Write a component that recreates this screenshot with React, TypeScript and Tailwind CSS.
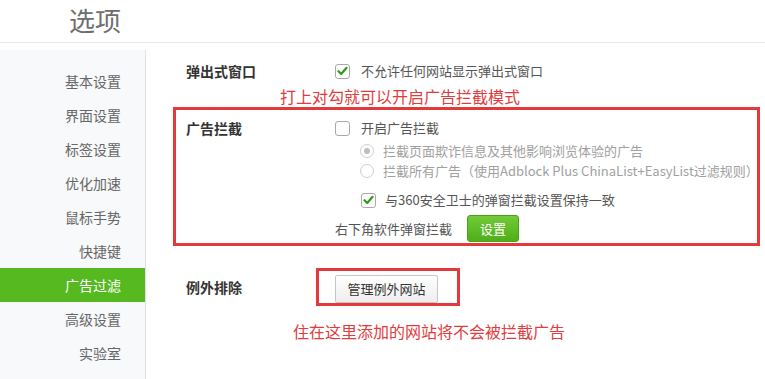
import React from 'react';

const font = '"Noto Sans CJK SC", "Liberation Sans", sans-serif';

const navItems = ['基本设置', '界面设置', '标签设置', '优化加速', '鼠标手势', '快捷键', '广告过滤', '高级设置', '实验室'];

function Checkbox({ checked }: { checked?: boolean }) {
  return (
    <span className="flex h-[15px] w-[15px] shrink-0 items-center justify-center rounded-[3px] border border-[#a9a9a9] bg-white">
      {checked && (
        <svg width="11" height="10" viewBox="0 0 11 10">
          <path d="M1.5 5.2 L4.2 8 L9.6 1.8" fill="none" stroke="#2f9a1c" strokeWidth="2.2" strokeLinecap="round" strokeLinejoin="round" />
        </svg>
      )}
    </span>
  );
}

function Radio({ checked }: { checked?: boolean }) {
  return (
    <span className="flex h-[14px] w-[14px] shrink-0 items-center justify-center rounded-full border border-[#cfcfcf] bg-white">
      {checked && <span className="h-[6px] w-[6px] rounded-full bg-[#bdbdbd]" />}
    </span>
  );
}

export default function App() {
  return (
    <div className="h-[379px] w-[765px] overflow-hidden bg-white" style={{ fontFamily: font }}>
      <div className="h-[43px] border-b border-[#e6e6e6] pl-[69px] pt-[3px]">
        <div className="text-[26px] leading-[34px] text-[#6e6e6e]">选项</div>
      </div>

      <div className="flex">
        <div className="mt-[7px] h-[340px] w-[146px] shrink-0 border-r border-[#e2e2e2] bg-[#f8f9fa] pt-[14px]">
          {navItems.map((item) => (
            <div
              key={item}
              className={
                item === '广告过滤'
                  ? 'h-[34px] bg-[#55b91f] pr-[24px] text-right text-[14px] leading-[34px] text-white'
                  : 'h-[34px] pr-[24px] text-right text-[14px] leading-[34px] text-[#666]'
              }
            >
              {item}
            </div>
          ))}
        </div>

        <div className="flex-1 pl-[40px] pt-[18px] text-[13px] text-[#555]">
          <div className="flex h-[20px] items-center">
            <div className="w-[149px] text-[14px] font-bold text-[#333]">弹出式窗口</div>
            <Checkbox checked />
            <span className="ml-[11px] leading-[20px]">不允许任何网站显示弹出式窗口</span>
          </div>

          <div className="ml-[94px] mt-[5px] h-[20px] text-[16px] leading-[20px] text-[#e23b3b]">打上对勾就可以开启广告拦截模式</div>

          <div className="-ml-[13px] mt-[1px] w-[587px] border-[3px] border-[#e4393c] pb-[1px] pl-[10px] pt-[8px]">
            <div className="flex h-[20px] items-center">
              <div className="w-[149px] text-[14px] font-bold text-[#333]">广告拦截</div>
              <Checkbox />
              <span className="ml-[11px]">开启广告拦截</span>
            </div>
            <div className="ml-[174px] mt-[3px] flex h-[20px] items-center text-[#a0a0a0]">
              <Radio checked />
              <span className="ml-[9px] whitespace-nowrap">拦截页面欺诈信息及其他影响浏览体验的广告</span>
            </div>
            <div className="ml-[174px] flex h-[20px] items-center text-[#a0a0a0]">
              <Radio />
              <span className="ml-[9px] whitespace-nowrap">拦截所有广告（使用Adblock Plus ChinaList+EasyList过滤规则）</span>
            </div>
            <div className="ml-[175px] mt-[9px] flex h-[20px] items-center">
              <Checkbox checked />
              <span className="ml-[9px]">与360安全卫士的弹窗拦截设置保持一致</span>
            </div>
            <div className="ml-[149px] mt-[5px] flex h-[27px] items-center">
              <span className="w-[132px]">右下角软件弹窗拦截</span>
              <button
                type="button"
                className="h-[27px] w-[52px] rounded-[3px] border border-[#4c9f1b] bg-gradient-to-b from-[#72cb37] to-[#4fae1a] text-[13px] text-white"
              >
                设置
              </button>
            </div>
          </div>

          <div className="mt-[22px] flex items-center">
            <div className="w-[130px] text-[14px] font-bold text-[#333]">例外排除</div>
            <div className="h-[38px] border-[3px] border-[#e4393c] pl-[16px] pr-[19px] pt-[4px]">
              <button
                type="button"
                className="h-[28px] w-[103px] rounded-[2px] border border-[#c6c6c6] bg-gradient-to-b from-white to-[#eeeeee] text-[13px] text-[#333]"
              >
                管理例外网站
              </button>
            </div>
          </div>

          <div className="ml-[107px] mt-[15px] h-[20px] text-[16px] leading-[20px] text-[#e23b3b]">住在这里添加的网站将不会被拦截广告</div>
        </div>
      </div>
    </div>
  );
}
